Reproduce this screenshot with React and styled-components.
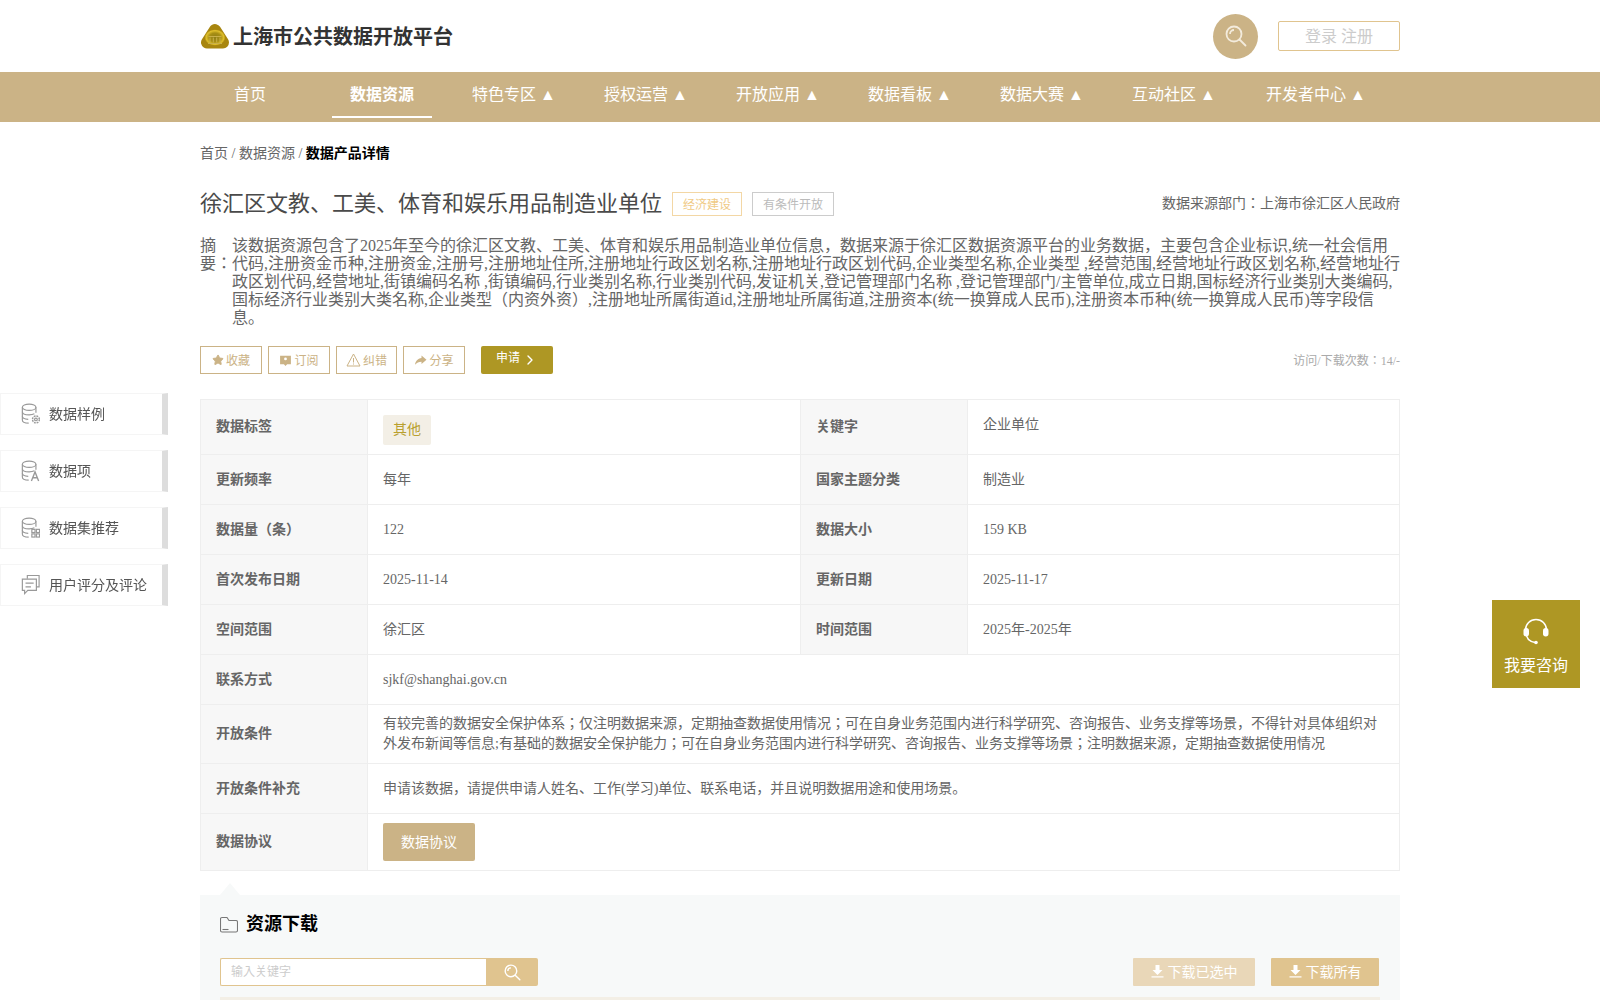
import React from 'react';
import styled, { createGlobalStyle } from 'styled-components';
import { ChevronRight, Star } from 'lucide-react';

const GOLD = '#cbb386';
const DARK_GOLD = '#ae9724';
const SAND = '#e0c48f';
// JP has the centred colon and semicolon seen in the reference
const FONT = '"Liberation Serif", "Noto Sans CJK JP", serif';

const navItems = [
  { label: '首页' },
  { label: '数据资源', active: true },
  { label: '特色专区 ▲' },
  { label: '授权运营 ▲' },
  { label: '开放应用 ▲' },
  { label: '数据看板 ▲' },
  { label: '数据大赛 ▲' },
  { label: '互动社区 ▲' },
  { label: '开发者中心 ▲', wide: true },
];

const DbBase = () => (
  <>
    <ellipse cx="9" cy="4.500" rx="7.500" ry="3.500" />
    <path d="M1.500 4.500v14c0 2 3 3.500 7 3.500" />
    <path d="M16.500 4.500v6" />
    <path d="M1.500 9.500c0 2 3.300 3.500 7.500 3.500 2.200 0 4.300-.4 5.800-1.200" />
    <path d="M1.500 14.500c0 1.800 2.700 3.200 6.500 3.400" />
  </>
);

const sideItems = [
  {
    label: '数据样例',
    icon: (
      <>
        <DbBase />
        <circle cx="16.500" cy="18" r="1.500" />
        <circle cx="16.500" cy="18" r="3.800" strokeDasharray="2 1" strokeWidth="1.600" />
      </>
    ),
  },
  {
    label: '数据项',
    icon: (
      <>
        <DbBase />
        <path d="M11.500 23l4-10 4 10M13 19.500h5" strokeWidth="1.500" />
      </>
    ),
  },
  {
    label: '数据集推荐',
    icon: (
      <>
        <DbBase />
        <rect x="12" y="13.500" width="3.500" height="3.500" />
        <rect x="17" y="13.500" width="3.500" height="3.500" />
        <rect x="12" y="18.500" width="3.500" height="3.500" />
        <rect x="17" y="18.500" width="3.500" height="3.500" />
      </>
    ),
  },
  {
    label: '用户评分及评论',
    icon: (
      <>
        <path d="M7 5V1.500h13V14h-3" />
        <path d="M1.500 5.500H17V18H7.500l-3.500 3.500V18H1.500z" />
        <path d="M5 10h9M5 14h6" />
      </>
    ),
  },
];

const abstract =
  '该数据资源包含了2025年至今的徐汇区文教、工美、体育和娱乐用品制造业单位信息，数据来源于徐汇区数据资源平台的业务数据，主要包含企业标识,统一社会信用代码,注册资金币种,注册资金,注册号,注册地址住所,注册地址行政区划名称,注册地址行政区划代码,企业类型名称,企业类型 ,经营范围,经营地址行政区划名称,经营地址行政区划代码,经营地址,街镇编码名称 ,街镇编码,行业类别名称,行业类别代码,发证机关,登记管理部门名称 ,登记管理部门/主管单位,成立日期,国标经济行业类别大类编码,国标经济行业类别大类名称,企业类型（内资外资）,注册地址所属街道id,注册地址所属街道,注册资本(统一换算成人民币),注册资本币种(统一换算成人民币)等字段信息。';

const GlobalStyle = createGlobalStyle`
  html, body {
    margin: 0;
    height: 100%;
    overflow: hidden;
    background: #fff;
  }
  * {
    box-sizing: border-box;
  }
`;

const Page = styled.div`
  font-family: ${FONT};
  color: #666;
  font-size: 14px;
`;

const Container = styled.div`
  width: 1200px;
  margin: 0 auto;
`;

const Header = styled(Container)`
  height: 72px;
  display: flex;
  align-items: center;
`;

const Brand = styled.div`
  display: flex;
  align-items: center;
  gap: 3px;
  margin-right: auto;
`;

const BrandName = styled.h1`
  margin: 2px 0 0;
  font-size: 20px;
  font-weight: 700;
  color: #333;
  line-height: 24px;
`;

const SearchCircle = styled.div`
  width: 45px;
  height: 45px;
  border-radius: 50%;
  background: ${GOLD};
  color: #f3ebdc;
  display: flex;
  align-items: center;
  justify-content: center;
  margin-right: 20px;
`;

const LoginButton = styled.div`
  width: 122px;
  height: 30px;
  padding-bottom: 2px;
  border: 1px solid ${SAND};
  border-radius: 2px;
  color: #ccc;
  font-size: 16px;
  display: flex;
  align-items: center;
  justify-content: center;
`;

const NavBar = styled.nav`
  height: 50px;
  background: ${GOLD};
`;

const NavInner = styled(Container)`
  display: flex;
  gap: 32px;
`;

const NavItem = styled.a`
  width: ${(p) => (p.$wide ? '120px' : '100px')};
  height: 46px;
  color: #fff;
  font-size: 16px;
  font-weight: ${(p) => (p.$active ? 700 : 400)};
  border-bottom: 2px solid ${(p) => (p.$active ? '#fff' : 'transparent')};
  display: flex;
  align-items: center;
  justify-content: center;
  white-space: nowrap;
  padding-bottom: 2px;
`;

const Breadcrumb = styled.div`
  margin-top: 23px;
  height: 18px;
  line-height: 18px;
  color: #666;
  b {
    color: #000;
  }
`;

const TitleRow = styled.div`
  margin-top: 27px;
  height: 28px;
  display: flex;
  align-items: center;
  gap: 10px;
`;

const Title = styled.h2`
  margin: 0 0 1px;
  font-size: 22px;
  line-height: 28px;
  font-weight: 400;
  color: #4a4a4a;
`;

const Tag = styled.span`
  height: 24px;
  padding: 0 10px;
  font-size: 12px;
  display: flex;
  align-items: center;
  border: 1px solid ${(p) => (p.$muted ? '#ccc' : '#f3d7a5')};
  color: ${(p) => (p.$muted ? '#bbb' : '#f0ca86')};
`;

const Source = styled.div`
  margin: 0 0 1px auto;
  line-height: 20px;
`;

const Abstract = styled.div`
  margin-top: 19px;
  display: flex;
  font-size: 16px;
  line-height: 18px;
  color: #666;
`;

const AbstractLabel = styled.div`
  width: 32px;
  flex: none;
`;

const Actions = styled.div`
  margin-top: 19px;
  height: 28px;
  display: flex;
  align-items: center;
  gap: 6px;
`;

const ActionButton = styled.button`
  width: ${(p) => p.$w}px;
  height: 28px;
  padding: 0;
  border: 1px solid ${GOLD};
  background: #fff;
  color: ${GOLD};
  font: 12px ${FONT};
  display: flex;
  align-items: center;
  justify-content: center;
  gap: 2px;
`;

const ApplyButton = styled.button`
  width: 72px;
  height: 28px;
  margin-left: 10px;
  padding: 0;
  border: 0;
  border-radius: 2px;
  background: ${DARK_GOLD};
  color: #fff;
  font: 12px ${FONT};
  display: flex;
  align-items: center;
  justify-content: center;
  gap: 2px;
`;

const ApplyLabel = styled.span`
  margin-bottom: 4px;
  line-height: 16px;
`;

const Visits = styled.div`
  margin-left: auto;
  font-size: 12px;
  color: #aaa;
`;

const InfoTable = styled.table`
  margin-top: 25px;
  width: 1200px;
  border-collapse: collapse;
  table-layout: fixed;
  border: 1px solid #eee;
`;

const Row = styled.tr`
  height: ${(p) => p.$h || 50}px;
`;

const Th = styled.th`
  padding: 0 15px;
  background: #f7f7f7;
  border: 1px solid #eee;
  text-align: left;
  font-weight: 700;
  color: #666;
  line-height: 20px;
`;

const Td = styled.td`
  padding: ${(p) => (p.$raised ? '0 15px 4px' : '0 15px')};
  border: 1px solid #eee;
  color: #666;
  line-height: 20px;
`;

const Chip = styled.span`
  display: inline-block;
  height: 30px;
  line-height: 30px;
  padding: 0 10px;
  margin-top: 5px;
  border-radius: 2px;
  background: #f3efe6;
  color: #b9a02f;
`;

const AgreementButton = styled.button`
  display: block;
  width: 92px;
  height: 38px;
  padding: 0 0 2px;
  border: 0;
  border-radius: 2px;
  background: ${GOLD};
  color: #fff;
  font: 14px ${FONT};
`;

const DownloadPanel = styled.section`
  position: relative;
  margin-top: 24px;
  padding: 0 20px;
  height: 300px;
  background: #f7f9f9;
  &::before {
    content: '';
    position: absolute;
    left: 20px;
    top: -12px;
    border-left: 10px solid transparent;
    border-right: 10px solid transparent;
    border-bottom: 12px solid #f7f9f9;
  }
`;

const PanelHead = styled.div`
  height: 58px;
  display: flex;
  align-items: center;
  gap: 4px;
`;

const PanelTitle = styled.h3`
  margin: 0 0 0 4px;
  font-size: 18px;
  line-height: 24px;
  font-weight: 700;
  color: #000;
`;

const Toolbar = styled.div`
  margin-top: 5px;
  height: 28px;
  padding-right: 1px;
  display: flex;
  align-items: stretch;
`;

const SearchInput = styled.input`
  width: 266px;
  padding: 0 10px;
  border: 1px solid ${SAND};
  border-right: 0;
  border-radius: 2px 0 0 2px;
  background: #fff;
  font: 12px ${FONT};
  &::placeholder {
    color: #ccc;
  }
`;

const SearchButton = styled.div`
  width: 52px;
  background: ${SAND};
  color: #fff;
  border-radius: 0 2px 2px 0;
  display: flex;
  align-items: center;
  justify-content: center;
`;

const DownloadButton = styled.button`
  width: ${(p) => p.$w}px;
  margin-left: ${(p) => p.$ml || 0};
  padding: 0 0 2px;
  border: 0;
  border-radius: 1px;
  background: ${(p) => (p.$faded ? '#e9d7b8' : SAND)};
  color: #fff;
  font: 14px ${FONT};
  display: flex;
  align-items: center;
  justify-content: center;
  gap: 4px;
`;

const ListHead = styled.div`
  margin-top: 11px;
  height: 40px;
  background: #f3efe6;
`;

const SideNav = styled.aside`
  position: fixed;
  left: 0;
  top: 393px;
  display: flex;
  flex-direction: column;
  gap: 15px;
`;

const SideItem = styled.div`
  width: 168px;
  height: 42px;
  padding-left: 20px;
  border: 1px solid #f5f5f5;
  border-right: 6px solid #ddd;
  background: #fff;
  color: #555;
  line-height: 20px;
  display: flex;
  align-items: center;
  gap: 9px;
`;

const SideLabel = styled.span`
  margin-top: 2px;
`;

const SideIcon = styled.svg`
  width: 19px;
  height: 22px;
  fill: none;
  stroke: #999;
  stroke-width: 1.300;
  flex: none;
`;

const Consult = styled.div`
  position: fixed;
  left: 1492px;
  top: 600px;
  width: 88px;
  height: 88px;
  background: ${DARK_GOLD};
  color: #fff;
  font-size: 16px;
  line-height: 22px;
  display: flex;
  flex-direction: column;
  align-items: center;
  justify-content: flex-end;
  padding-bottom: 11px;
  gap: 10px;
`;

const Logo = () => (
  <svg width="30" height="26" viewBox="0 0 30 26">
    <defs>
      <radialGradient id="logoGold" cx="0.500" cy="0.600" r="0.650">
        <stop offset="0" stopColor="#8f7f18" />
        <stop offset="0.550" stopColor="#a88f14" />
        <stop offset="0.850" stopColor="#e0c02c" />
        <stop offset="1" stopColor="#a8860f" />
      </radialGradient>
    </defs>
    <path
      d="M15 7L7 19.500h16z"
      fill="url(#logoGold)"
      stroke="url(#logoGold)"
      strokeWidth="12"
      strokeLinejoin="round"
    />
    <path
      d="M8.500 13.500h13M10 14.500v5M13.300 14.500v5M16.700 14.500v5M20 14.500v5M8 20.500h14"
      stroke="#c9b04a"
      strokeWidth="1"
      fill="none"
    />
  </svg>
);

const SearchGlyph = ({ size }) => (
  <svg width={size} height={size} viewBox="0 0 22 22" fill="none" stroke="currentColor" strokeWidth="1.800">
    <circle cx="9" cy="9" r="7.500" />
    <path d="M5 9a4 4 0 0 1 4-4" />
    <path d="M14.500 14.500L20.500 20.500" strokeLinecap="round" />
  </svg>
);

const HeadsetIcon = () => (
  <svg width="28" height="28" viewBox="0 0 28 28" fill="none">
    <path
      d="M3.500 13a10.500 10.500 0 0 1 21 0M4 15c0 6 3 9.500 9 10.500"
      stroke="#fff"
      strokeWidth="1.500"
    />
    <rect x="1.500" y="11" width="5.500" height="8.500" rx="2.700" fill="#fff" />
    <rect x="21" y="11" width="5.500" height="8.500" rx="2.700" fill="#fff" />
    <circle cx="14" cy="25.500" r="1.800" fill="#fff" />
  </svg>
);

const SubscribeIcon = () => (
  <svg width="13" height="13" viewBox="0 0 12 12">
    <path
      d="M1 1.500h10v8H7.500L6 11 4.500 9.500H1z M6 3.200a1.300 1.300 0 1 0 0 2.600 1.300 1.300 0 0 0 0-2.600z"
      fill={GOLD}
      fillRule="evenodd"
    />
  </svg>
);

const WarnIcon = () => (
  <svg width="15" height="14" viewBox="0 0 15 14" fill="none" stroke={GOLD}>
    <path d="M7.500 1L14 13H1z" />
    <path d="M7.500 5v4.500M7.500 10.500v1" />
  </svg>
);

const ShareIcon = () => (
  <svg width="13" height="12" viewBox="0 0 13 12">
    <path d="M7.500 1.500l5 4.300-5 4.200V7.700C4.800 7.700 2.700 8.500 1 10.800c.4-3.700 2.700-6.500 6.500-6.900z" fill={GOLD} />
  </svg>
);

const FolderIcon = () => (
  <svg width="18" height="17" viewBox="0 0 18 17" fill="none" stroke="#777" strokeWidth="1.100">
    <path d="M2 1.500h5l2 3h7a1.500 1.500 0 0 1 1.500 1.500v8.500a1.500 1.500 0 0 1-1.500 1.500H2A1.500 1.500 0 0 1 .5 14.500V3A1.500 1.500 0 0 1 2 1.500z" />
    <path d="M2.500 13.500h6" />
  </svg>
);

const DownloadGlyph = () => (
  <svg width="13" height="14" viewBox="0 0 13 14" fill="#fff">
    <path d="M4.500 1h4v5h3l-5 5-5-5h3z" />
    <rect x="0.500" y="12.300" width="12" height="1.200" />
  </svg>
);

const App = () => (
  <Page>
    <GlobalStyle />
    <Header>
      <Brand>
        <Logo />
        <BrandName>上海市公共数据开放平台</BrandName>
      </Brand>
      <SearchCircle>
        <SearchGlyph size={22} />
      </SearchCircle>
      <LoginButton>登录 注册</LoginButton>
    </Header>
    <NavBar>
      <NavInner>
        {navItems.map((item) => (
          <NavItem key={item.label} $active={item.active} $wide={item.wide}>
            {item.label}
          </NavItem>
        ))}
      </NavInner>
    </NavBar>
    <Container>
      <Breadcrumb>
        首页 / 数据资源 / <b>数据产品详情</b>
      </Breadcrumb>
      <TitleRow>
        <Title>徐汇区文教、工美、体育和娱乐用品制造业单位</Title>
        <Tag>经济建设</Tag>
        <Tag $muted>有条件开放</Tag>
        <Source>数据来源部门：上海市徐汇区人民政府</Source>
      </TitleRow>
      <Abstract>
        <AbstractLabel>摘要：</AbstractLabel>
        <div>{abstract}</div>
      </Abstract>
      <Actions>
        <ActionButton $w={62}>
          <Star size={12} fill={GOLD} stroke={GOLD} />
          收藏
        </ActionButton>
        <ActionButton $w={62}>
          <SubscribeIcon />
          订阅
        </ActionButton>
        <ActionButton $w={61}>
          <WarnIcon />
          纠错
        </ActionButton>
        <ActionButton $w={62}>
          <ShareIcon />
          分享
        </ActionButton>
        <ApplyButton>
          <ApplyLabel>申请</ApplyLabel>
          <ChevronRight size={16} />
        </ApplyButton>
        <Visits>访问/下载次数：14/-</Visits>
      </Actions>
      <InfoTable>
        <colgroup>
          <col style={{ width: 167 }} />
          <col style={{ width: 433 }} />
          <col style={{ width: 167 }} />
          <col />
        </colgroup>
        <tbody>
          <Row $h={55}>
            <Th>数据标签</Th>
            <Td>
              <Chip>其他</Chip>
            </Td>
            <Th>关键字</Th>
            <Td $raised>企业单位</Td>
          </Row>
          <Row>
            <Th>更新频率</Th>
            <Td>每年</Td>
            <Th>国家主题分类</Th>
            <Td>制造业</Td>
          </Row>
          <Row>
            <Th>数据量（条）</Th>
            <Td>122</Td>
            <Th>数据大小</Th>
            <Td>159 KB</Td>
          </Row>
          <Row>
            <Th>首次发布日期</Th>
            <Td>2025-11-14</Td>
            <Th>更新日期</Th>
            <Td>2025-11-17</Td>
          </Row>
          <Row>
            <Th>空间范围</Th>
            <Td>徐汇区</Td>
            <Th>时间范围</Th>
            <Td>2025年-2025年</Td>
          </Row>
          <Row>
            <Th>联系方式</Th>
            <Td colSpan={3}>sjkf@shanghai.gov.cn</Td>
          </Row>
          <Row $h={59}>
            <Th>开放条件</Th>
            <Td colSpan={3}>
              有较完善的数据安全保护体系；仅注明数据来源，定期抽查数据使用情况；可在自身业务范围内进行科学研究、咨询报告、业务支撑等场景，不得针对具体组织对外发布新闻等信息;有基础的数据安全保护能力；可在自身业务范围内进行科学研究、咨询报告、业务支撑等场景；注明数据来源，定期抽查数据使用情况
            </Td>
          </Row>
          <Row>
            <Th>开放条件补充</Th>
            <Td colSpan={3}>申请该数据，请提供申请人姓名、工作(学习)单位、联系电话，并且说明数据用途和使用场景。</Td>
          </Row>
          <Row $h={57}>
            <Th>数据协议</Th>
            <Td colSpan={3}>
              <AgreementButton>数据协议</AgreementButton>
            </Td>
          </Row>
        </tbody>
      </InfoTable>
      <DownloadPanel>
        <PanelHead>
          <FolderIcon />
          <PanelTitle>资源下载</PanelTitle>
        </PanelHead>
        <Toolbar>
          <SearchInput placeholder="输入关键字" />
          <SearchButton>
            <SearchGlyph size={17} />
          </SearchButton>
          <DownloadButton $w={122} $faded $ml="auto">
            <DownloadGlyph />
            下载已选中
          </DownloadButton>
          <DownloadButton $w={108} $ml="16px">
            <DownloadGlyph />
            下载所有
          </DownloadButton>
        </Toolbar>
        <ListHead />
      </DownloadPanel>
    </Container>
    <SideNav>
      {sideItems.map((item) => (
        <SideItem key={item.label}>
          <SideIcon viewBox="0 0 21 24">{item.icon}</SideIcon>
          <SideLabel>{item.label}</SideLabel>
        </SideItem>
      ))}
    </SideNav>
    <Consult>
      <HeadsetIcon />
      我要咨询
    </Consult>
  </Page>
);

export default App;
